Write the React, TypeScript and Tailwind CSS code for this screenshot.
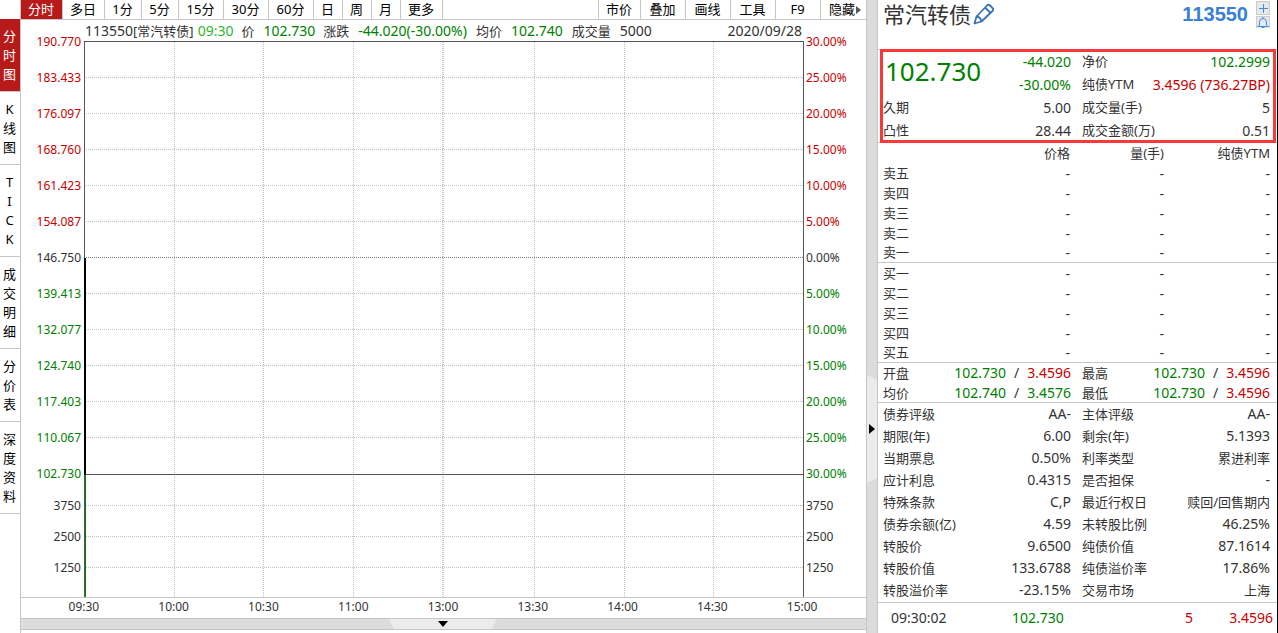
import { useState } from "react";

type Tone = "up" | "down" | "flat";

const toneClass: Record<Tone, string> = {
  up: "text-[#c80000]",
  down: "text-[#008000]",
  flat: "text-[#333333]",
};

const periods = [
  { label: "分时", width: "w-[42px]" },
  { label: "多日", width: "w-[42px]" },
  { label: "1分", width: "w-[37px]" },
  { label: "5分", width: "w-[37px]" },
  { label: "15分", width: "w-[45px]" },
  { label: "30分", width: "w-[45px]" },
  { label: "60分", width: "w-[45px]" },
  { label: "日", width: "w-[29px]" },
  { label: "周", width: "w-[29px]" },
  { label: "月", width: "w-[29px]" },
  { label: "更多", width: "w-[42px]" },
];

const tools = ["市价", "叠加", "画线", "工具", "F9"];

const views = ["分时图", "K线图", "TICK", "成交明细", "分价表", "深度资料"];

const levels: { price: string; pct: string; tone: Tone }[] = [
  { price: "190.770", pct: "30.00%", tone: "up" },
  { price: "183.433", pct: "25.00%", tone: "up" },
  { price: "176.097", pct: "20.00%", tone: "up" },
  { price: "168.760", pct: "15.00%", tone: "up" },
  { price: "161.423", pct: "10.00%", tone: "up" },
  { price: "154.087", pct: "5.00%", tone: "up" },
  { price: "146.750", pct: "0.00%", tone: "flat" },
  { price: "139.413", pct: "5.00%", tone: "down" },
  { price: "132.077", pct: "10.00%", tone: "down" },
  { price: "124.740", pct: "15.00%", tone: "down" },
  { price: "117.403", pct: "20.00%", tone: "down" },
  { price: "110.067", pct: "25.00%", tone: "down" },
  { price: "102.730", pct: "30.00%", tone: "down" },
];

const volumes = ["3750", "2500", "1250"];

const times = ["09:30", "10:00", "10:30", "11:00", "13:00", "13:30", "14:00", "14:30", "15:00"];

const asks = ["卖五", "卖四", "卖三", "卖二", "卖一"];
const bids = ["买一", "买二", "买三", "买四", "买五"];

const details = [
  ["债券评级", "AA-", "主体评级", "AA-"],
  ["期限(年)", "6.00", "剩余(年)", "5.1393"],
  ["当期票息", "0.50%", "利率类型", "累进利率"],
  ["应计利息", "0.4315", "是否担保", "-"],
  ["特殊条款", "C,P", "最近行权日", "赎回/回售期内"],
  ["债券余额(亿)", "4.59", "未转股比例", "46.25%"],
  ["转股价", "9.6500", "纯债价值", "87.1614"],
  ["转股价值", "133.6788", "纯债溢价率", "17.86%"],
  ["转股溢价率", "-23.15%", "交易市场", "上海"],
];

function Toolbar() {
  const [active, setActive] = useState("分时");

  return (
    <nav className="flex h-5 border-b border-[#c6c6c6] text-[13px] leading-[19px] text-black">
      {periods.map((p) => (
        <button
          key={p.label}
          type="button"
          onClick={() => setActive(p.label)}
          className={`${p.width} shrink-0 border-r border-[#c6c6c6] pr-px ${active === p.label ? "bg-[#b81a1a] text-white" : ""}`}
        >
          {p.label}
        </button>
      ))}
      <div className="flex-1 border-r border-[#c6c6c6]" />
      {tools.map((t, i) => (
        <button
          key={t}
          type="button"
          className={`${i === 0 ? "w-[42px]" : "w-[45px]"} shrink-0 border-r border-[#c6c6c6] pr-px`}
        >
          {t}
        </button>
      ))}
      <button type="button" className="flex w-[45px] shrink-0 items-center justify-end gap-px pr-[5px]">
        隐藏
        <svg width="5" height="8" viewBox="0 0 5 8" aria-hidden="true">
          <path d="M0 0 L5 4 L0 8 Z" fill="#555555" />
        </svg>
      </button>
    </nav>
  );
}

function Sidebar() {
  const [active, setActive] = useState("分时图");

  return (
    <nav className="w-5 shrink-0 pt-[19px] text-[13px] leading-[19px] text-black">
      {views.map((v) => (
        <button
          key={v}
          type="button"
          onClick={() => setActive(v)}
          className={`block w-full border-b border-[#c6c6c6] pt-2 pr-px pb-[7px] ${active === v ? "bg-[#b81a1a] text-white" : ""}`}
        >
          {v.split("").map((ch) => (
            <span key={ch} className="block">
              {ch}
            </span>
          ))}
        </button>
      ))}
    </nav>
  );
}

function Plot() {
  const dotted = [36, 72, 108, 144, 180, 252, 288, 324, 360, 396, 464, 495, 526];
  const columns = ["12.5%", "24.9%", "37.4%", "62.5%", "75%", "87.4%"];

  return (
    <svg width="100%" height="556" className="block" shapeRendering="crispEdges" role="img" aria-label="分时走势">
      <g stroke="#c0c0c0" strokeWidth="1" strokeDasharray="1 1">
        {dotted.map((y) => (
          <line key={y} x1="2" x2="100%" y1={y + 0.5} y2={y + 0.5} />
        ))}
        {columns.map((x) => (
          <line key={x} x1={x} x2={x} y1="1" y2="556" />
        ))}
        <line x1="49.9%" x2="49.9%" y1="1" y2="556" stroke="#cccccc" strokeWidth="2" />
      </g>
      <line x1="2" x2="100%" y1="216.5" y2="216.5" stroke="#808080" strokeDasharray="1 1" />
      <rect x="0" y="0" width="100%" height="1" fill="#555555" />
      <rect x="0" y="433" width="100%" height="1" fill="#555555" />
      <rect x="0" y="0" width="1" height="556" fill="#555555" />
      <svg x="100%" overflow="visible">
        <rect x="-1" y="0" width="1" height="556" fill="#555555" />
      </svg>
      <rect x="0" y="217" width="2" height="217" fill="#000000" />
      <rect x="1" y="434" width="1" height="122" fill="#008000" />
    </svg>
  );
}

function Axis({ side }: { side: "left" | "right" }) {
  const left = side === "left";

  return (
    <div className={`shrink-0 pt-1 text-xs ${left ? "w-[63px] pr-[3px] text-right" : "w-[62px] pl-[2px]"}`}>
      {levels.map((l) => (
        <div key={l.price} className={`h-9 leading-9 ${toneClass[l.tone]}`}>
          {left ? l.price : l.pct}
        </div>
      ))}
      {volumes.map((v) => (
        <div key={v} className="h-[31px] leading-[27px]">
          {v}
        </div>
      ))}
    </div>
  );
}

function ChartPanel() {
  return (
    <main className="flex min-w-0 flex-1 flex-col border-x border-[#c6c6c6]">
      <Toolbar />
      <div className="flex h-[578px] border-b border-[#c6c6c6]">
        <Axis side="left" />
        <div className="min-w-0 flex-1">
          <div className="flex h-[21px] items-center gap-[9px] pr-[2px] pl-px text-[13px] leading-5 whitespace-nowrap">
            <span className="-mr-[5px]">
              <span className="text-sm">113550</span>[常汽转债]
            </span>
            <span className="text-sm text-[#2db82d]">09:30</span>
            <span className="-ml-px">价</span>
            <span className="text-sm text-[#008000]">102.730</span>
            <span className="-ml-px">涨跌</span>
            <span className="text-sm text-[#008000]">-44.020(-30.00%)</span>
            <span>均价</span>
            <span className="text-sm text-[#008000]">102.740</span>
            <span>成交量</span>
            <span className="text-sm">5000</span>
            <span className="ml-auto text-sm">2020/09/28</span>
          </div>
          <Plot />
        </div>
        <Axis side="right" />
      </div>
      <div className="grid h-5 grid-cols-9 pr-[19px] pl-[18px] text-center text-xs leading-[18px]">
        {times.map((t) => (
          <span key={t}>{t}</span>
        ))}
      </div>
      <button
        type="button"
        aria-label="展开下方面板"
        className="flex h-3 justify-center border-y border-[#c6c6c6] bg-[#dcdcdc] pr-[2px]"
      >
        <svg width="108" height="10" viewBox="0 0 108 10" aria-hidden="true">
          <path d="M0 0 H108 L103 10 H5 Z" fill="#ebebeb" />
          <path d="M49 2 H59 L54 8 Z" fill="#000000" />
        </svg>
      </button>
    </main>
  );
}

function Pair({ label, value, tone = "flat" }: { label: string; value: string; tone?: Tone }) {
  return (
    <div className="flex justify-between whitespace-nowrap">
      <dt>{label}</dt>
      <dd className={`${/[\u4e00-\u9fff]/.test(value) ? "" : "text-sm leading-[inherit]"} ${toneClass[tone]}`}>{value}</dd>
    </div>
  );
}

function RangePair({ label, price, ytm, tone }: { label: string; price: string; ytm: string; tone: Tone }) {
  return (
    <div className="flex justify-between">
      <dt>{label}</dt>
      <dd className="flex gap-2 text-sm leading-[inherit]">
        <span className="text-[#008000]">{price}</span>
        <span>/</span>
        <span className={toneClass[tone]}>{ytm}</span>
      </dd>
    </div>
  );
}

function BookRows({ rows }: { rows: string[] }) {
  return (
    <tbody className="[&>tr:last-child>*]:border-b [&>tr:last-child>*]:border-[#c6c6c6]">
      {rows.map((r) => (
        <tr key={r} className="h-5">
          <th scope="row" className="pl-[5px] text-left font-normal">
            {r}
          </th>
          <td>-</td>
          <td>-</td>
          <td className="pr-[7px]">-</td>
        </tr>
      ))}
    </tbody>
  );
}

function QuotePanel() {
  return (
    <aside className="w-[401px] shrink-0 border-r border-l border-r-black border-l-[#c6c6c6] text-[13px]">
      <header className="flex h-[49px] items-start pr-[7px] pl-[5px]">
        <h1 className="text-[22px] leading-7">常汽转债</h1>
        <button type="button" aria-label="编辑" className="mt-[3px] ml-[2px]">
          <svg width="22" height="22" viewBox="0 0 22 22" fill="none" stroke="#3a72b8" strokeWidth="1.8" strokeLinejoin="round">
            <path d="M1.5 20.5 L3.5 13.5 L14 2.5 Q15.5 1 17 2.5 L19.5 5 Q21 6.500 19.500 8 L8.500 18.500 Z" />
            <path d="M12 4.500 L17.500 10 M3.500 13.500 Q7.500 14 8.500 18.500" />
          </svg>
        </button>
        <span className="ml-auto font-['Liberation_Sans',Arial,sans-serif] text-xl leading-7 font-bold text-[#3a80d2]">
          113550
        </span>
        <div className="mt-px ml-2 flex flex-col gap-px">
          <button type="button" aria-label="添加自选" className="border border-[#cccccc] bg-[#e8e8e8]">
            <svg width="12" height="12" viewBox="0 0 12 12" stroke="#3a90f0" shapeRendering="crispEdges">
              <path d="M6.500 2 V11 M2 6.500 H11" />
            </svg>
          </button>
          <button type="button" aria-label="预警" className="border border-b-0 border-[#cccccc] bg-[#e8e8e8]">
            <svg width="12" height="11" viewBox="0 0 12 11" fill="none" stroke="#3a90f0">
              <path d="M0.500 9.500 H11.500 M1 9.500 L2.500 8 V5 Q2.500 1.500 6 1.500 Q9.500 1.500 9.500 5 V8 L11 9.500 M6 0 V1.500 M4.500 10.500 H7.500" />
            </svg>
          </button>
        </div>
      </header>

      <section className="relative border-y border-[#c6c6c6]">
        <dl className="grid grid-cols-2 gap-x-[11px] pr-[7px] pl-[5px] leading-[23px]">
          <div className="row-span-2 flex items-start justify-between">
            <dt className="pl-[2px] text-[26px] leading-[42px] text-[#008000]">102.730</dt>
            <dd className="text-right text-sm leading-[23px] text-[#008000]">
              <div>-44.020</div>
              <div>-30.00%</div>
            </dd>
          </div>
          <Pair label="净价" value="102.2999" tone="down" />
          <Pair label="纯债YTM" value="3.4596 (736.27BP)" tone="up" />
          <Pair label="久期" value="5.00" />
          <Pair label="成交量(手)" value="5" />
          <Pair label="凸性" value="28.44" />
          <Pair label="成交金额(万)" value="0.51" />
        </dl>
        <div className="pointer-events-none absolute -inset-y-px right-px left-[2px] border-3 border-[#fa3838]" />
      </section>

      <table className="w-full table-fixed border-separate border-spacing-0 text-right leading-[19px] [&_td]:text-sm [&_td]:leading-[19px]">
        <thead>
          <tr className="h-5">
            <th className="w-[85px]" aria-label="档位" />
            <th className="font-normal">价格</th>
            <th className="w-[94px] font-normal">量(手)</th>
            <th className="w-[113px] pr-[7px] font-normal">纯债YTM</th>
          </tr>
        </thead>
        <BookRows rows={asks} />
        <BookRows rows={bids} />
      </table>

      <dl className="grid h-10 grid-cols-2 gap-x-[11px] border-b border-[#c6c6c6] pr-[7px] pl-[5px] leading-5">
        <RangePair label="开盘" price="102.730" ytm="3.4596" tone="up" />
        <RangePair label="最高" price="102.730" ytm="3.4596" tone="up" />
        <RangePair label="均价" price="102.740" ytm="3.4576" tone="down" />
        <RangePair label="最低" price="102.730" ytm="3.4596" tone="up" />
      </dl>

      <dl className="border-b border-[#c6c6c6] pr-[7px] pb-px pl-[5px] leading-[22px]">
        {details.map(([l1, v1, l2, v2]) => (
          <div key={l1} className="grid grid-cols-2 gap-x-[11px]">
            <Pair label={l1} value={v1} />
            <Pair label={l2} value={v2} />
          </div>
        ))}
      </dl>

      <div className="flex pr-1 pl-[13px] text-sm leading-[30px]">
        <span className="w-[121px]">09:30:02</span>
        <span className="text-[#008000]">102.730</span>
        <span className="ml-auto text-[#c80000]">5</span>
        <span className="w-20 text-right text-[#c80000]">3.4596</span>
      </div>
    </aside>
  );
}

export default function App() {
  return (
    <div className="flex min-h-screen overflow-hidden bg-white font-['Noto_Sans','Noto_Sans_CJK_SC',sans-serif] text-[#333333]">
      <Sidebar />
      <ChartPanel />
      <button type="button" aria-label="收起右侧面板" className="flex w-[10px] shrink-0 items-start bg-[#dcdcdc] pt-[375px]">
        <svg width="10" height="108" viewBox="0 0 10 108" aria-hidden="true">
          <path d="M0 0 L10 5 V103 L0 108 Z" fill="#ebebeb" />
          <path d="M2 49 L8 54 L2 59 Z" fill="#000000" />
        </svg>
      </button>
      <QuotePanel />
    </div>
  );
}
